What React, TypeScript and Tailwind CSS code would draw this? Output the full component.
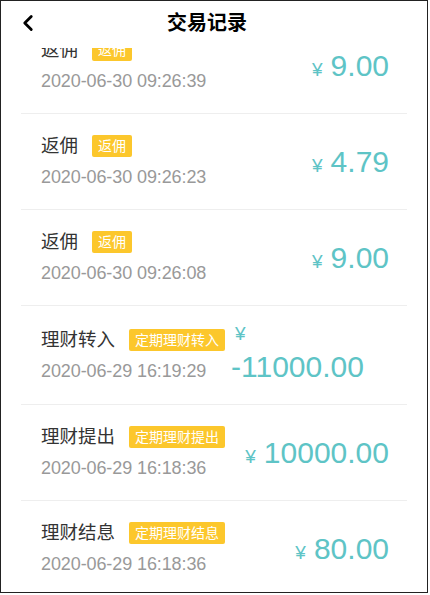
import { ChevronLeft } from 'lucide-react'

type Record = {
  title: string
  tag: string
  time: string
  amount: string
  wrap?: boolean
}

const records: Record[] = [
  { title: '返佣', tag: '返佣', time: '2020-06-30 09:26:39', amount: '9.00' },
  { title: '返佣', tag: '返佣', time: '2020-06-30 09:26:23', amount: '4.79' },
  { title: '返佣', tag: '返佣', time: '2020-06-30 09:26:08', amount: '9.00' },
  {
    title: '理财转入',
    tag: '定期理财转入',
    time: '2020-06-29 16:19:29',
    amount: '-11000.00',
    wrap: true,
  },
  {
    title: '理财提出',
    tag: '定期理财提出',
    time: '2020-06-29 16:18:36',
    amount: '10000.00',
  },
  {
    title: '理财结息',
    tag: '定期理财结息',
    time: '2020-06-29 16:18:36',
    amount: '80.00',
  },
]

function RecordRow({ item }: { item: Record }) {
  return (
    <div
      className={`mx-5 border-b border-[#eeeeee] flex items-center justify-between pl-5 pr-[18px] ${
        item.wrap ? 'h-[99px]' : 'h-[96px]'
      }`}
    >
      <div className="flex flex-col shrink-0">
        <div className="flex items-center h-[22px]">
          <span className="text-[18.5px] leading-[22px] text-[#333]">{item.title}</span>
          <span className="ml-[14px] h-[22px] px-[6px] rounded-[2px] bg-[#fcc72c] text-white text-[14px] leading-[22px]">
            {item.tag}
          </span>
        </div>
        <span className="mt-[9px] text-[18px] leading-[22px] text-[#999] tracking-[-0.1px]">
          {item.time}
        </span>
      </div>
      {item.wrap ? (
        <div className="ml-[6px] flex-1 flex flex-col text-[#5ec4c6] -mt-[2px]">
          <span className="pl-[4px] text-[19px] leading-[20px]">¥</span>
          <span className="mt-[6px] text-[30px] leading-[34px]">{item.amount}</span>
        </div>
      ) : (
        <div className="mt-[3px] flex items-baseline text-[#5ec4c6] whitespace-nowrap">
          <span className="text-[19px] mr-[8px]">¥</span>
          <span className="text-[30px] leading-[34px]">{item.amount}</span>
        </div>
      )}
    </div>
  )
}

export default function App() {
  return (
    <div
      className="w-[428px] h-[593px] border border-[#222] bg-white flex flex-col overflow-hidden"
      style={{ fontFamily: '"Liberation Sans", "Noto Sans CJK SC", sans-serif' }}
    >
      {/* HEADER */}
      <div className="relative z-10 h-[47px] shrink-0 bg-white flex items-center px-[14px] pb-[3px]">
        <ChevronLeft className="w-[26px] h-[26px] text-black" strokeWidth={2.6} />
        <h1 className="flex-1 text-center text-[20px] font-bold text-black mr-[40px]">
          交易记录
        </h1>
      </div>

      {/* LIST */}
      <div className="flex-1 overflow-hidden">
        <div className="-mt-[30px]">
          {records.map((r, i) => (
            <RecordRow key={i} item={r} />
          ))}
        </div>
      </div>
    </div>
  )
}
